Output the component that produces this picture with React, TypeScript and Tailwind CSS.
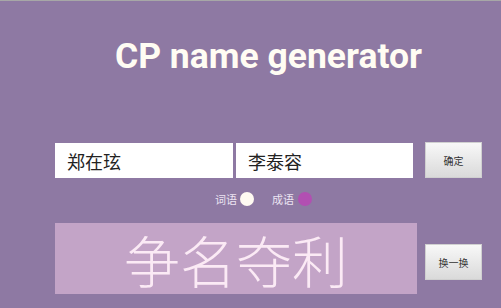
import { useState } from "react";

const cjk = { fontFamily: '"Noto Sans CJK SC", "Noto Sans", sans-serif' };

function GrayButton({ label, className = "" }: { label: string; className?: string }) {
  return (
    <button
      className={`w-[57px] h-[36px] shrink-0 bg-gradient-to-b from-[#f8f8f8] to-[#dadada] border border-[#d0d0d0] text-[10px] text-[#333] ${className}`}
      style={cjk}
    >
      {label}
    </button>
  );
}

export default function App() {
  const [mode, setMode] = useState<"ci" | "cheng">("cheng");

  return (
    <div className="w-[501px] h-[308px] bg-[#8e79a3] border-t border-[#a7a7a7] overflow-hidden">
      <div className="ml-[55px] w-[427px] pt-[37px]">
        {/* Title */}
        <h1
          className="text-center text-[35.5px] leading-[36px] font-bold text-[#fffcf3]"
          style={{ fontFamily: "Roboto, sans-serif" }}
        >
          CP name generator
        </h1>

        {/* Names */}
        <div className="mt-[68px] flex items-end">
          <input
            defaultValue="郑在玹"
            className="w-[178px] h-[35px] bg-white pl-[12px] text-[18px] text-[#222] outline-none"
            style={cjk}
          />
          <input
            defaultValue="李泰容"
            className="ml-[3px] w-[177px] h-[35px] bg-white pl-[12px] text-[18px] text-[#222] outline-none"
            style={cjk}
          />
          <GrayButton label="确定" className="ml-[12px]" />
        </div>

        {/* Mode */}
        <div className="mt-[14px] ml-[160px] h-[14px] flex items-center text-[11px] text-[#ece4f2]" style={cjk}>
          <span>词语</span>
          <span
            onClick={() => setMode("ci")}
            className={`ml-[3px] w-[14px] h-[14px] rounded-full ${mode === "ci" ? "bg-[#b24fb2]" : "bg-[#fffaf2]"}`}
          />
          <span className="ml-[18px]">成语</span>
          <span
            onClick={() => setMode("cheng")}
            className={`ml-[4px] w-[14px] h-[14px] rounded-full ${mode === "cheng" ? "bg-[#b24fb2]" : "bg-[#fffaf2]"}`}
          />
        </div>

        {/* Result */}
        <div className="mt-[17px] flex items-start">
          <div
            className="w-[362px] h-[71px] bg-[#c3a4c7] flex items-center justify-center text-[56px] font-light text-[#fbeaf5] leading-none"
            style={cjk}
          >
            争名夺利
          </div>
          <GrayButton label="换一换" className="ml-[8px] mt-[21px]" />
        </div>
      </div>
    </div>
  );
}
